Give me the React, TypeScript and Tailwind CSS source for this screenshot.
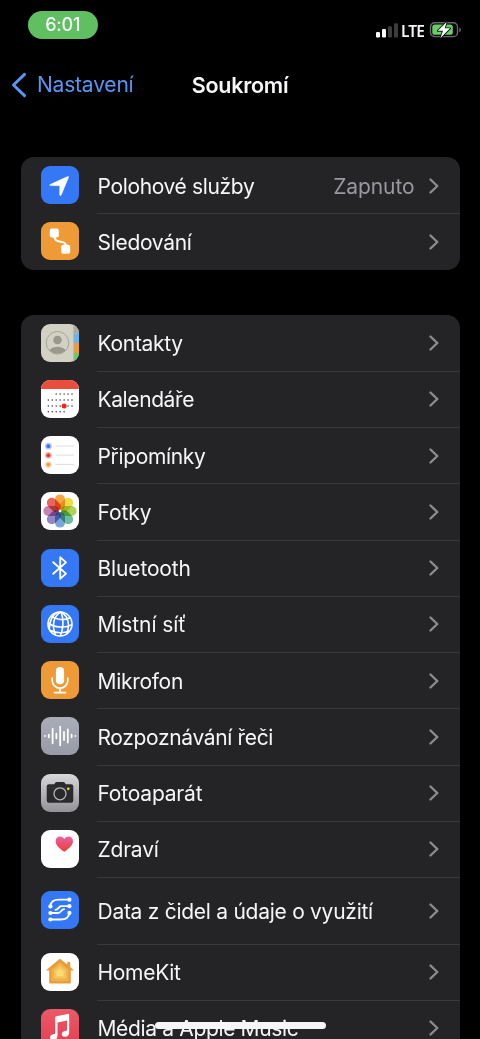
import React from "react";

interface RowItem {
  id: string;
  label: string;
  icon: React.ReactNode;
  labelClass?: string;
  value?: string;
  tall?: boolean;
}

interface TileProps {
  className?: string;
  children: React.ReactNode;
}

function Tile({ className = "", children }: TileProps) {
  return (
    <div className={`w-[38px] h-[38px] shrink-0 rounded-[9px] overflow-hidden ${className}`}>
      <svg viewBox="0 0 38 38" className="block w-[38px] h-[38px]" fill="none">
        {children}
      </svg>
    </div>
  );
}

function LocationIcon() {
  return (
    <Tile className="bg-[#3478f6]">
      <path
        d="M9 18.6 26.6 10.6Q27.900 10.200 27.500 11.500L20.200 29Q19.300 30.500 18.700 29V20.300Q18.700 19.700 18.100 19.700L9.200 19.600Q8 19.200 9 18.600Z"
        fill="#fff"
        stroke="#fff"
        strokeWidth="0.5"
        strokeLinejoin="round"
      />
    </Tile>
  );
}

function TrackingIcon() {
  return (
    <Tile className="bg-[#ee9a37]">
      <rect x="8.8" y="6.5" width="9" height="9" rx="2" fill="#fff" />
      <rect x="20.2" y="22.8" width="9" height="9" rx="2" fill="#fff" />
      <path
        d="M13.5 15c0 3 1.600 3.800 5 4.400 4.400.7 6.400 1.500 6.400 4.600"
        stroke="#fff"
        strokeWidth="2"
      />
    </Tile>
  );
}

function ContactsIcon() {
  return (
    <Tile className="bg-[#d3d1c4]">
      <rect x="33" y="0" width="5" height="9.5" fill="#a9a9a4" />
      <rect x="33" y="9.5" width="5" height="9.5" fill="#67b5f0" />
      <rect x="33" y="19" width="5" height="10" fill="#f09a38" />
      <rect x="33" y="29" width="5" height="9" fill="#64cb68" />
      <rect x="32.2" y="0" width="1.1" height="38" fill="#b3b1a7" />
      <clipPath id="avatar">
        <circle cx="16.5" cy="18.8" r="11" />
      </clipPath>
      <g clipPath="url(#avatar)" fill="#99988f">
        <circle cx="16.5" cy="16" r="4.3" />
        <ellipse cx="16.5" cy="29" rx="9" ry="6.3" />
      </g>
      <circle cx="16.5" cy="18.8" r="11.3" stroke="#a6a49b" strokeWidth="1" />
    </Tile>
  );
}

const CALENDAR_DOTS = [
  { y: 14, from: 2, to: 6 },
  { y: 20, from: 0, to: 6 },
  { y: 26, from: 0, to: 6 },
  { y: 31.7, from: 0, to: 4 },
];

function CalendarIcon() {
  return (
    <Tile className="bg-white">
      <rect width="38" height="9" fill="#eb4d3d" />
      {CALENDAR_DOTS.map((line) =>
        [0, 1, 2, 3, 4, 5, 6]
          .filter((col) => col >= line.from && col <= line.to)
          .map((col) => (
            <circle
              key={`${line.y}-${col}`}
              cx={7.3 + col * 3.95}
              cy={line.y}
              r="0.75"
              fill="#33333a"
            />
          ))
      )}
      <circle cx="23.1" cy="25.9" r="2.5" fill="#e8281e" />
    </Tile>
  );
}

function RemindersIcon() {
  return (
    <Tile className="bg-white">
      {[
        { y: 10.2, color: "#3672f0" },
        { y: 19.3, color: "#e5352b" },
        { y: 28.6, color: "#ee9a37" },
      ].map((dot) => (
        <g key={dot.color}>
          <circle cx="7.4" cy={dot.y} r="3.4" fill={dot.color} opacity="0.38" />
          <circle cx="7.4" cy={dot.y} r="1.9" fill={dot.color} />
          <path d={`M14.5 ${dot.y - 0.2}H33`} stroke="#d9d9de" strokeWidth="0.9" />
        </g>
      ))}
    </Tile>
  );
}

const PETALS = ["#f3a02f", "#ecd93a", "#a8cf4c", "#5fb995", "#6f9fd8", "#8a7cc0", "#c078ae", "#e9584b"];

function PhotosIcon() {
  return (
    <Tile className="bg-white">
      {PETALS.map((color, i) => (
        <rect
          key={color}
          x="14"
          y="2.4"
          width="10"
          height="15.6"
          rx="5"
          fill={color}
          opacity="0.92"
          transform={`rotate(${i * 45} 19 19)`}
          className="mix-blend-multiply"
        />
      ))}
      <circle cx="19" cy="19" r="1.2" fill="#fff" />
    </Tile>
  );
}

function BluetoothIcon() {
  return (
    <Tile className="bg-[#3478f6]">
      <path
        d="M12.200 13.200 25 24.600 19.200 29.800V8.200L25 13.400 12.200 24.800"
        stroke="#fff"
        strokeWidth="1.9"
        strokeLinejoin="round"
        strokeLinecap="round"
      />
    </Tile>
  );
}

function GlobeIcon() {
  return (
    <Tile className="bg-[#3478f6]">
      <g stroke="#fff" strokeWidth="1.6">
        <circle cx="19" cy="19" r="12" />
        <path d="M20 7C12.5 11 10.5 20 14.5 30" />
        <path d="M20 7c2.800 6.500 2.600 16.500-.7 24" />
        <path d="M20 7c8 4.500 9 14 5.400 22.200" />
        <path d="M19.800 7C13 7.500 9 12.500 8.300 24" />
        <path d="M10 11c5.800 4.200 13.500 4.600 19.200 1.800" />
        <path d="M7 18c6.500 4.800 17.500 5.400 24 1.600" />
        <path d="M8.800 25.200c5.500 2.800 13.500 3.200 20 .6" />
      </g>
    </Tile>
  );
}

function MicIcon() {
  return (
    <Tile className="bg-[#ee9a37]">
      <rect x="14.9" y="6" width="8.2" height="17.3" rx="4.1" fill="#fff" />
      <path
        d="M11.200 17v2.300a7.800 7.800 0 0 0 15.600 0V17M19 27.200v3.900M13.500 31.600h11"
        stroke="#fff"
        strokeWidth="1.7"
        strokeLinecap="round"
      />
    </Tile>
  );
}

const WAVE = [2, 4.5, 16.5, 6.5, 20.5, 10, 15, 4.5, 2];

function SpeechIcon() {
  return (
    <Tile className="bg-linear-to-b from-[#a9adb8] to-[#989ba7]">
      {WAVE.map((height, i) => (
        <rect
          key={i}
          x={3.1 + i * 3.8}
          y={19 - height / 2}
          width="1.8"
          height={height}
          rx="0.9"
          fill="#fff"
        />
      ))}
    </Tile>
  );
}

function CameraIcon() {
  return (
    <Tile className="bg-linear-to-b from-[#d8d8dc] to-[#929297]">
      <path
        d="M8 10.200h5.200l1.300-1.800q.4-.4 1-.4h7q.6 0 1 .4l1.300 1.800H30q2.300 0 2.300 2.200v14.200q0 2.200-2.300 2.200H8q-2.300 0-2.300-2.200V12.400q0-2.200 2.300-2.200Z"
        fill="#2b2b2e"
      />
      <path d="M6 13.800h26" stroke="#454549" strokeWidth="0.6" />
      <circle cx="19" cy="19.8" r="6" fill="#29292c" stroke="#b6b6ba" strokeWidth="1.3" />
      <circle cx="27.3" cy="14.8" r="1.4" fill="#e6d33c" />
    </Tile>
  );
}

function HealthIcon() {
  return (
    <Tile className="bg-white">
      <defs>
        <linearGradient id="heart" x1="0" y1="0" x2="0" y2="1">
          <stop offset="0" stopColor="#ea5fa6" />
          <stop offset="1" stopColor="#eb402e" />
        </linearGradient>
      </defs>
      <path
        d="M23.300 21.800C17.800 17.800 14.600 14.800 14.600 11.200c0-2.900 2-4.700 4.400-4.700 1.900 0 3.400 1 4.300 2.600.9-1.600 2.400-2.600 4.300-2.600 2.400 0 4.400 1.800 4.400 4.700 0 3.600-3.200 6.600-8.700 10.600Z"
        fill="url(#heart)"
      />
    </Tile>
  );
}

function SensorIcon() {
  return (
    <Tile className="bg-[#3478f6]">
      <g stroke="#fff" strokeWidth="1.800" strokeLinecap="round">
        <path d="M28.300 8.700H18c-5 0-8.300 2-8.600 6.500" />
        <path d="M28.300 15.200H20.500c-3.200 0-3 3.600-6 3.700" />
        <path d="M9.300 22h7.700c3.400 0 3-3.700 6-3.800" />
        <path d="M9.300 28.500H19.500c5.200 0 8.500-2 8.800-6.500" />
      </g>
      <g fill="#fff">
        <circle cx="28.4" cy="8.7" r="2.1" />
        <circle cx="28.4" cy="15.2" r="2.1" />
        <circle cx="9.4" cy="15.4" r="2.1" />
        <circle cx="9.4" cy="22" r="2.1" />
        <circle cx="28.4" cy="21.900" r="2.1" />
        <circle cx="9.4" cy="28.500" r="2.1" />
      </g>
    </Tile>
  );
}

function HomeIcon() {
  return (
    <Tile className="bg-white">
      <path
        d="M18.200 6.300q.8-.6 1.600 0l6.400 5.200V9.400q0-.5.5-.5h2q.5 0 .5.5v4.700l3.200 2.600q.5.7-.2.9H29.800v11.700q0 1.300-1.300 1.300h-19q-1.300 0-1.300-1.300V17.600H5.800q-.8-.2-.2-.9Z"
        fill="#ea9c38"
      />
      <path d="m19 9.400 8.500 7v10.800q0 1-1 1h-15q-1 0-1-1V16.400Z" fill="#f0b04b" />
      <path d="m19 12.300 6 5v7.500q0 .8-.8.8H13.800q-.8 0-.8-.8v-7.500Z" fill="#f5c45a" />
      <path d="m19 15.200 3.500 3v5H15.500v-5Z" fill="#f9dc78" />
    </Tile>
  );
}

function MusicIcon() {
  return (
    <Tile className="bg-linear-to-b from-[#ea5a68] to-[#e63c50]">
      <path
        d="M14.200 8.800q0-1.200 1.200-1.500l11.500-2.200q1.300-.2 1.300 1.100v17q0 4.300-4.300 4.600-3.100 0-3.100-2.700 0-2.300 2.900-3l1.600-.4q.7-.2.700-1V11.600L16.500 13.500v13q0 4.200-4.200 4.500-3.200 0-3.200-2.700 0-2.300 2.900-3l1.500-.4q.7-.2.7-1Z"
        fill="#fff"
      />
    </Tile>
  );
}

const LOCATION_ROWS: RowItem[] = [
  {
    id: "location",
    label: "Polohové služby",
    icon: <LocationIcon />,
    labelClass: "tracking-[-0.35px]",
    value: "Zapnuto",
  },
  { id: "tracking", label: "Sledování", icon: <TrackingIcon /> },
];

const APP_ROWS: RowItem[] = [
  { id: "contacts", label: "Kontakty", icon: <ContactsIcon /> },
  { id: "calendars", label: "Kalendáře", icon: <CalendarIcon />, labelClass: "tracking-[-0.4px]" },
  { id: "reminders", label: "Připomínky", icon: <RemindersIcon />, labelClass: "tracking-[-0.35px]" },
  { id: "photos", label: "Fotky", icon: <PhotosIcon />, labelClass: "tracking-[-0.1px]" },
  { id: "bluetooth", label: "Bluetooth", icon: <BluetoothIcon />, labelClass: "tracking-[-0.15px]" },
  { id: "network", label: "Místní síť", icon: <GlobeIcon />, labelClass: "tracking-[-0.1px]" },
  { id: "microphone", label: "Mikrofon", icon: <MicIcon /> },
  {
    id: "speech",
    label: "Rozpoznávání řeči",
    icon: <SpeechIcon />,
    labelClass: "tracking-[-0.35px]",
  },
  { id: "camera", label: "Fotoaparát", icon: <CameraIcon />, labelClass: "tracking-[-0.2px]" },
  { id: "health", label: "Zdraví", icon: <HealthIcon />, labelClass: "tracking-[-0.2px]" },
  {
    id: "sensors",
    label: "Data z čidel a údaje o využití",
    icon: <SensorIcon />,
    labelClass: "tracking-[-0.27px]",
    tall: true,
  },
  { id: "homekit", label: "HomeKit", icon: <HomeIcon /> },
  { id: "music", label: "Média a Apple Music", icon: <MusicIcon />, labelClass: "tracking-[-0.35px]" },
];

function Chevron() {
  return (
    <svg viewBox="0 0 10 16" className="w-[10px] h-[16px] shrink-0" fill="none">
      <path
        d="M1.500 1.500 8.300 8l-6.800 6.500"
        stroke="#8b8b90"
        strokeWidth="2.4"
        strokeLinecap="round"
        strokeLinejoin="round"
      />
    </svg>
  );
}

function Row({ item, first }: { item: RowItem; first: boolean }) {
  return (
    <div className={`flex items-center pl-5 ${item.tall ? "h-[66.500px]" : "h-[56.25px]"}`}>
      {item.icon}
      <div
        className={`ml-[18.500px] flex h-full flex-1 items-center border-t pr-[21px] ${
          first ? "border-transparent" : "border-[#39393b]"
        }`}
      >
        <span
          className={`flex-1 whitespace-nowrap pl-[0.5px] pt-[2px] ${
            item.labelClass ?? "tracking-[-0.3px]"
          }`}
        >
          {item.label}
        </span>
        {item.value && (
          <span className="mr-[14px] pt-[2px] tracking-[-0.1px] text-[#98989f]">{item.value}</span>
        )}
        <Chevron />
      </div>
    </div>
  );
}

function Group({ rows }: { rows: RowItem[] }) {
  return (
    <div className="overflow-hidden rounded-[13px] bg-[#242426]">
      {rows.map((item, i) => (
        <Row key={item.id} item={item} first={i === 0} />
      ))}
    </div>
  );
}

function StatusBar() {
  return (
    <div className="flex h-[50px] items-start justify-between pl-[27.500px] pr-[18px] pt-[11px]">
      <div className="flex h-[27.500px] w-[70.500px] items-center justify-center rounded-full bg-[#5fbf61] pt-px text-[18px] font-medium tracking-[-0.2px]">
        6:01
      </div>
      <div className="flex items-center pt-[10px]">
        <svg viewBox="0 0 24 16" className="w-6 h-4" fill="#fff">
          <rect x="1" y="10" width="4" height="5.5" rx="1.2" />
          <rect x="7" y="7" width="4" height="8.5" rx="1.2" />
          <rect x="13" y="4.2" width="4" height="11.3" rx="1.2" fill="#3c3c3e" />
          <rect x="19" y="1.3" width="4" height="14.2" rx="1.2" fill="#3c3c3e" />
        </svg>
        <span className="ml-[2px] w-[25px] whitespace-nowrap pt-px font-['Noto_Sans',sans-serif] text-[15.500px] leading-4 tracking-[-0.8px] font-semibold">
          LTE
        </span>
        <svg viewBox="0 0 33 18" className="ml-[3px] w-[33px] h-[18px]" fill="none">
          <rect x="1.5" y="1.8" width="27" height="13.8" rx="4.2" stroke="#69696b" strokeWidth="1.4" />
          <path d="M30.300 6.500q1.700.7 1.700 2.400t-1.700 2.400Z" fill="#69696b" />
          <rect x="3.3" y="3.6" width="20.5" height="10.2" rx="2.6" fill="#68ce6a" />
          <path
            d="M17.600 1 8.800 9.800h5.200l-2.600 7.200 9.700-9.700h-5.300Z"
            fill="#fff"
            stroke="#0d1a0d"
            strokeWidth="1.8"
            paintOrder="stroke"
            strokeLinejoin="round"
          />
        </svg>
      </div>
    </div>
  );
}

function NavBar() {
  return (
    <div className="grid h-[70px] grid-cols-[1fr_auto_1fr] items-center">
      <div className="flex items-center pl-[11px] text-[#5796f1]">
        <svg viewBox="0 0 16 26" className="w-4 h-[26px]" fill="none">
          <path
            d="M13.500 2.300 2.500 13l11 10.700"
            stroke="currentColor"
            strokeWidth="3"
            strokeLinecap="round"
            strokeLinejoin="round"
          />
        </svg>
        <span className="ml-[10px] tracking-[-0.2px]">Nastavení</span>
      </div>
      <h1 className="font-semibold text-[21.500px] tracking-[-0.250px]">Soukromí</h1>
      <div />
    </div>
  );
}

export default function App() {
  return (
    <div className="relative h-[1039px] w-[480px] overflow-hidden bg-black font-['Inter',sans-serif] text-[21px] leading-7 text-[#f6f6f8]">
      <StatusBar />
      <NavBar />
      <div className="flex flex-col gap-[45px] pl-[20.500px] pr-[20.500px] pt-[37px]">
        <Group rows={LOCATION_ROWS} />
        <Group rows={APP_ROWS} />
      </div>

      {/* Home indicator */}
      <div className="absolute left-[154.500px] top-[1022px] h-[6.500px] w-[171.500px] rounded-full bg-[#f6f6f6]" />
    </div>
  );
}
